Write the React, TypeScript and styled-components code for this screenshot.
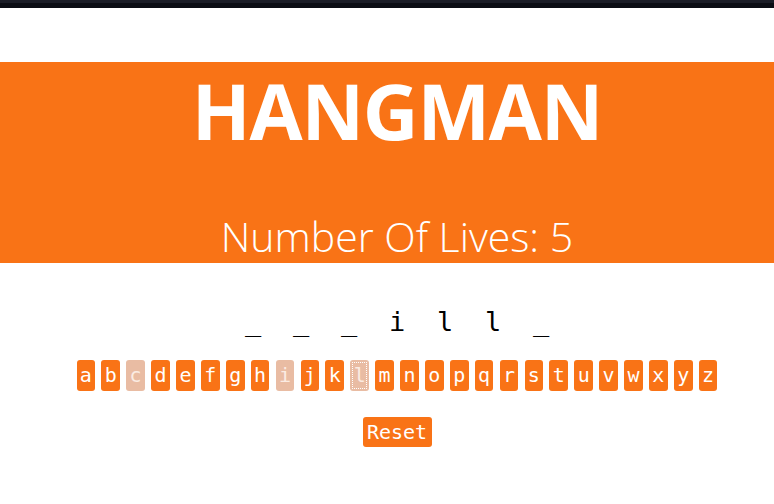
import React, { useState } from "react";
import styled, { createGlobalStyle } from "styled-components";

const Global = createGlobalStyle`
  html, body { margin: 0; padding: 0; background: #fff; }
  body { font-family: "Lato", "Open Sans", sans-serif; }
`;

const TopBar = styled.div`
  height: 8px;
  background: linear-gradient(#1b1d27 0 3px, #0b0d14 3px 8px);
`;

const Page = styled.div`
  padding-top: 54px;
`;

const Header = styled.header`
  background: #f97316;
  height: 201px;
  padding-left: 20px;
  display: flex;
  flex-direction: column;
  align-items: center;
  color: #fff;
`;

const Title = styled.h1`
  margin: -1px 0 0;
  font-family: "Open Sans", sans-serif;
  font-weight: 700;
  font-size: 77px;
  line-height: 1.3;
  letter-spacing: -1.2px;
`;

const Lives = styled.h2`
  margin: auto 0 3px;
  font-family: "Open Sans", sans-serif;
  font-weight: 300;
  font-size: 41px;
  line-height: 48px;
`;

const Main = styled.main`
  padding-left: 20px;
`;

const Word = styled.div`
  display: flex;
  justify-content: center;
  gap: 32px;
  margin-top: 43px;
  font-family: "DejaVu Sans Mono", monospace;
  font-size: 27px;
  line-height: 32px;
  color: #000;
`;

const Char = styled.span`
  width: 16px;
  text-align: center;
`;

const Keys = styled.div`
  display: flex;
  justify-content: center;
  gap: 6.3px;
  margin-top: 22px;
`;

const Key = styled.button<{ $focused?: boolean }>`
  width: 18.6px;
  height: 31px;
  padding: 0;
  border: none;
  border-radius: 3px;
  background: #f97316;
  color: #fff;
  font-family: "DejaVu Sans Mono", monospace;
  font-size: 20px;
  line-height: 31px;
  display: flex;
  align-items: center;
  justify-content: center;
  outline: ${(p) => (p.$focused ? "1px dotted #fff" : "none")};
  outline-offset: -3px;
  &:disabled {
    background: #e9bca3;
    color: #fbece3;
  }
`;

const ResetRow = styled.div`
  display: flex;
  justify-content: center;
  margin-top: 26px;
`;

const ResetButton = styled.button`
  width: 69px;
  height: 30px;
  padding: 0;
  border: none;
  border-radius: 3px;
  background: #f97316;
  color: #fff;
  font-family: "DejaVu Sans Mono", monospace;
  font-size: 20px;
  line-height: 30px;
`;

const letters = "abcdefghijklmnopqrstuvwxyz".split("");
const used = new Set(["c", "i", "l"]);
const word = ["_", "_", "_", "i", "l", "l", "_"];

export default function App() {
  const [lives] = useState(5);
  return (
    <>
      <Global />
      <TopBar />
      <Page>
        <Header>
          <Title>HANGMAN</Title>
          <Lives>Number Of Lives: {lives}</Lives>
        </Header>
        <Main>
          <Word>
            {word.map((c, i) => (
              <Char key={i}>{c}</Char>
            ))}
          </Word>
          <Keys>
            {letters.map((l) => (
              <Key key={l} disabled={used.has(l)} $focused={l === "l"}>
                {l}
              </Key>
            ))}
          </Keys>
          <ResetRow>
            <ResetButton>Reset</ResetButton>
          </ResetRow>
        </Main>
      </Page>
    </>
  );
}
